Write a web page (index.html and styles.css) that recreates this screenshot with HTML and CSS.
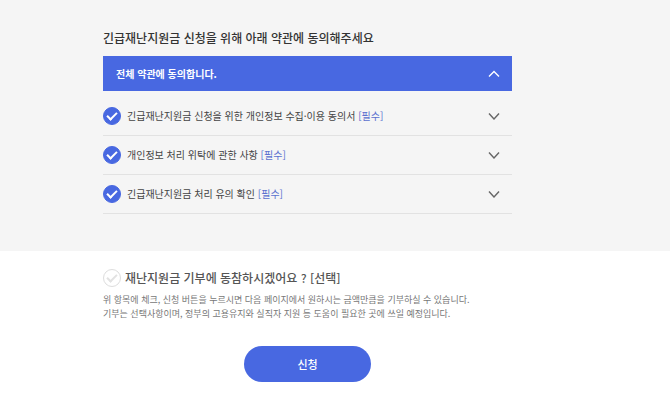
FILE: index.html
```
<!DOCTYPE html>
<html lang="ko">
<head>
    <meta charset="UTF-8">
    <meta name="viewport" content="width=device-width, initial-scale=1.0">
    <title>긴급재난지원금 신청</title>
    <link rel="stylesheet" href="styles.css">
</head>
<body>
    <form>
        <section class="terms">
            <h2 class="terms-title">긴급재난지원금 신청을 위해 아래 약관에 동의해주세요</h2>
            <button type="button" class="agree-all" aria-expanded="true">
                <span>전체 약관에 동의합니다.</span>
                <svg class="arrow" viewBox="0 0 12 8"><path d="M1 6.5L6 1.5L11 6.5"/></svg>
            </button>
            <ul class="terms-list">
                <li class="terms-item">
                    <input type="checkbox" class="check" id="term1" checked>
                    <label for="term1">긴급재난지원금 신청을 위한 개인정보 수집·이용 동의서 <span class="required">[필수]</span></label>
                    <button type="button" class="toggle" aria-label="펼치기">
                        <svg class="arrow" viewBox="0 0 12 8"><path d="M1 1.5L6 7L11 1.5"/></svg>
                    </button>
                </li>
                <li class="terms-item">
                    <input type="checkbox" class="check" id="term2" checked>
                    <label for="term2">개인정보 처리 위탁에 관한 사항 <span class="required">[필수]</span></label>
                    <button type="button" class="toggle" aria-label="펼치기">
                        <svg class="arrow" viewBox="0 0 12 8"><path d="M1 1.5L6 7L11 1.5"/></svg>
                    </button>
                </li>
                <li class="terms-item">
                    <input type="checkbox" class="check" id="term3" checked>
                    <label for="term3">긴급재난지원금 처리 유의 확인 <span class="required">[필수]</span></label>
                    <button type="button" class="toggle" aria-label="펼치기">
                        <svg class="arrow" viewBox="0 0 12 8"><path d="M1 1.5L6 7L11 1.5"/></svg>
                    </button>
                </li>
            </ul>
        </section>

        <section class="donate">
            <div class="donate-title">
                <input type="checkbox" class="check" id="donate">
                <label for="donate">재난지원금 기부에 동참하시겠어요 ? [선택]</label>
            </div>
            <p class="donate-desc">
                위 항목에 체크, 신청 버튼을 누르시면 다음 페이지에서 원하시는 금액만큼을 기부하실 수 있습니다.<br>
                기부는 선택사항이며, 정부의 고용유지와 실직자 지원 등 도움이 필요한 곳에 쓰일 예정입니다.
            </p>
            <button type="submit" class="submit">신청</button>
        </section>
    </form>
</body>
</html>
```

FILE: styles.css
```
* {
    box-sizing: border-box;
}

body {
    margin: 0;
    background: #fff;
    color: #444;
    font-family: "Noto Sans CJK KR", sans-serif;
    font-size: 10px;
}

button {
    font-family: inherit;
    border: none;
    padding: 0;
    cursor: pointer;
}

.terms {
    background: #f5f5f5;
    padding: 28px 158px 37px 103px;
}

.terms-title {
    margin: 0 0 8px;
    font-size: 12px;
    font-weight: 500;
    line-height: 20px;
    color: #333;
    white-space: nowrap;
}

.agree-all {
    display: flex;
    align-items: center;
    justify-content: space-between;
    width: 100%;
    height: 35px;
    padding: 0 12px 0 13px;
    background: #4868e1;
    color: #fff;
    font-size: 10px;
    font-weight: 700;
}

.arrow {
    display: block;
    width: 12px;
    height: 8px;
    fill: none;
    stroke: currentColor;
    stroke-width: 1.4;
}

.terms-list {
    list-style: none;
    margin: 6px 0 0;
    padding: 0;
}

.terms-item {
    display: flex;
    align-items: center;
    gap: 6px;
    height: 39px;
    padding-right: 12px;
    border-bottom: 1px solid #e2e2e2;
    line-height: 14px;
    white-space: nowrap;
}

.required {
    color: #5a70cf;
}

.toggle {
    margin-left: auto;
    background: none;
    color: #666;
}

.check {
    appearance: none;
    display: grid;
    place-items: center;
    flex-shrink: 0;
    width: 18px;
    height: 18px;
    margin: 0;
    border: 1px solid #ddd;
    border-radius: 50%;
    cursor: pointer;
}

.check::before {
    content: "";
    box-sizing: border-box;
    width: 10px;
    height: 6px;
    margin-bottom: 3px;
    border: solid #e2e2e2;
    border-width: 0 0 2px 2px;
    transform: rotate(-45deg);
}

.check:checked {
    background: #4868e1;
    border-color: #4868e1;
}

.check:checked::before {
    border-color: #fff;
}

.donate {
    padding: 17px 158px 34px 103px;
}

.donate-title {
    display: flex;
    align-items: center;
    gap: 4px;
    font-size: 12px;
    font-weight: 500;
    line-height: 20px;
    color: #555;
}

.donate-desc {
    margin: 5px 0 0;
    font-size: 9px;
    line-height: 14px;
    color: #777;
    white-space: nowrap;
}

.submit {
    display: block;
    width: 127px;
    height: 36px;
    margin: 25px auto 0;
    border-radius: 18px;
    background: #4868e1;
    color: #fff;
    font-size: 11px;
    font-weight: 500;
}
```
